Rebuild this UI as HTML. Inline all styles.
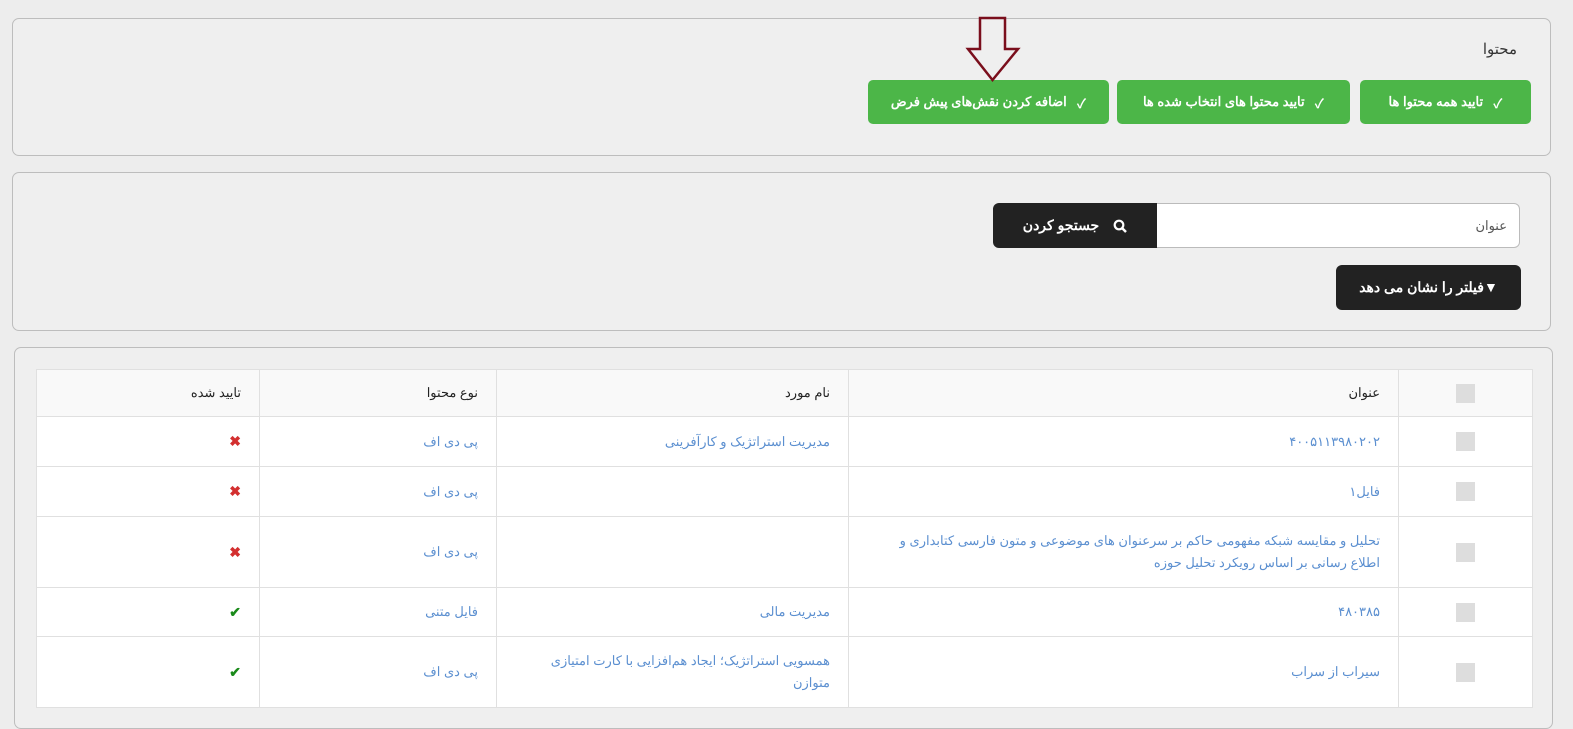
<!DOCTYPE html>
<html><head><meta charset="utf-8"><style>
body{margin:0;width:1573px;height:710px;overflow:hidden;background:#ededed;font-family:"Liberation Sans","Noto Sans CJK SC",sans-serif;position:relative}
.p{position:absolute;border:1px solid #bdbdbd;border-radius:7px;background:rgba(240,240,240,.6)}
.btn{position:absolute;background:#4cb648;color:#fff;border-radius:5px;font-size:13px;font-weight:bold;display:flex;align-items:center;justify-content:center;direction:rtl;gap:10px}
.dk{position:absolute;background:#222;color:#fff;font-size:14px;font-weight:bold;display:flex;align-items:center;justify-content:center;direction:rtl}
table{position:absolute;left:36px;top:369px;width:1496px;border-collapse:collapse;table-layout:fixed;background:#fff;direction:rtl;font-size:13px}
td,th{border:1px solid #e0e0e0;text-align:right;padding:0 18px;color:#5b8fd0;font-weight:normal}
th{color:#222;background:#f9f9f9;height:46px}
td.c,th.c{text-align:center;padding:0}
.cb{display:inline-block;width:19px;height:19px;background:#ddd;vertical-align:middle}
.x{color:#d32f2f;font-weight:bold;font-size:14px}.ok{color:#1a8a1a;font-weight:bold;font-size:14px}
</style></head><body>
<div class="p" style="left:12px;top:18px;width:1537px;height:136px"></div>
<div style="position:absolute;right:56px;top:40px;font-size:15px;color:#333">محتوا</div>
<div class="btn" style="left:1360px;top:80px;width:171px;height:44px">✓ <span>تایید همه محتوا ها</span></div>
<div class="btn" style="left:1117px;top:80px;width:233px;height:44px">✓ <span>تایید محتوا های انتخاب شده ها</span></div>
<div class="btn" style="left:868px;top:80px;width:241px;height:44px">✓ <span>اضافه کردن نقش‌های پیش فرض</span></div>
<svg style="position:absolute;left:965px;top:15px" width="60" height="68"><path d="M15 3H40V34H53L27.5 65L3 34H15Z" fill="none" stroke="#7a0e1c" stroke-width="2.5"/></svg>
<div class="p" style="left:12px;top:172px;width:1537px;height:157px"></div>
<div style="position:absolute;left:1157px;top:203px;width:362px;height:43px;background:#fff;border:1px solid #bbb;border-left:none;border-radius:0 6px 6px 0;font-size:13px;color:#555;direction:rtl;line-height:43px"><span style="margin-right:12px">عنوان</span></div>
<div class="dk" style="left:993px;top:203px;width:164px;height:45px;border-radius:6px 0 0 6px;gap:14px"><svg width="14" height="14"><circle cx="6" cy="6" r="4.3" fill="none" stroke="#fff" stroke-width="2.2"/><path d="M9 9L13 13" stroke="#fff" stroke-width="2.5"/></svg><span>جستجو کردن</span></div>
<div class="dk" style="left:1336px;top:265px;width:185px;height:45px;border-radius:6px">▼فیلتر را نشان می دهد</div>
<div class="p" style="left:14px;top:347px;width:1537px;height:380px"></div>
<table>
<colgroup><col style="width:134px"><col style="width:550px"><col style="width:352px"><col style="width:237px"><col style="width:223px"></colgroup>
<tr><th class="c"><span class="cb"></span></th><th>عنوان</th><th>نام مورد</th><th>نوع محتوا</th><th>تایید شده</th></tr>
<tr style="height:50px"><td class="c"><span class="cb"></span></td><td>۴۰۰۵۱۱۳۹۸۰۲۰۲</td><td>مدیریت استراتژیک و کارآفرینی</td><td>پی دی اف</td><td><span class="x">✖</span></td></tr>
<tr style="height:50px"><td class="c"><span class="cb"></span></td><td>فایل۱</td><td></td><td>پی دی اف</td><td><span class="x">✖</span></td></tr>
<tr style="height:71px"><td class="c"><span class="cb"></span></td><td style="line-height:22px">تحلیل و مقایسه شبکه مفهومی حاکم بر سرعنوان های موضوعی و متون فارسی کتابداری و اطلاع رسانی بر اساس رویکرد تحلیل حوزه</td><td></td><td>پی دی اف</td><td><span class="x">✖</span></td></tr>
<tr style="height:49px"><td class="c"><span class="cb"></span></td><td>۴۸۰۳۸۵</td><td>مدیریت مالی</td><td>فایل متنی</td><td><span class="ok">✔</span></td></tr>
<tr style="height:71px"><td class="c"><span class="cb"></span></td><td>سیراب از سراب</td><td style="line-height:22px">همسویی استراتژیک؛ ایجاد هم‌افزایی با کارت امتیازی متوازن</td><td>پی دی اف</td><td><span class="ok">✔</span></td></tr>
</table>
</body></html>
